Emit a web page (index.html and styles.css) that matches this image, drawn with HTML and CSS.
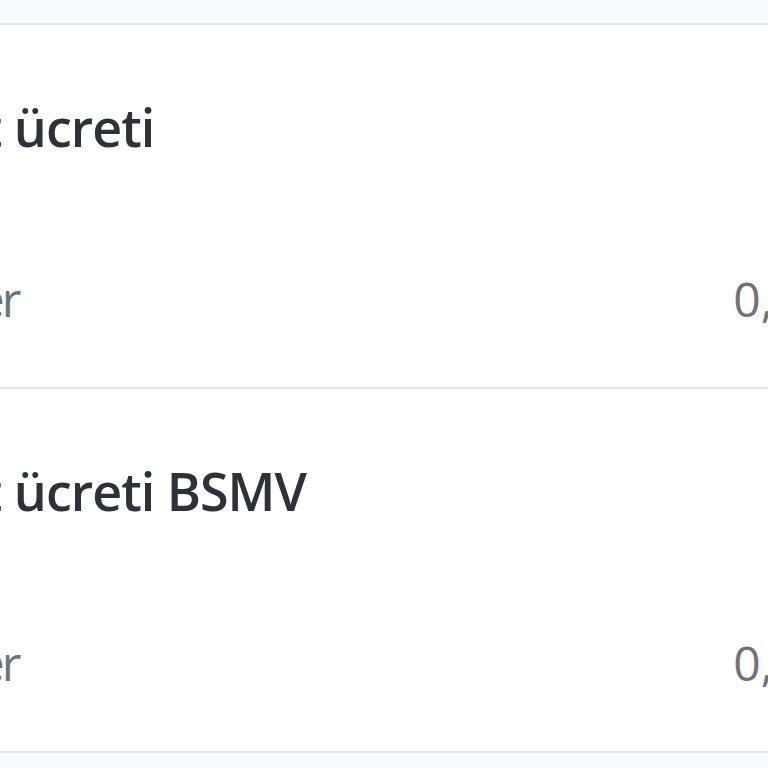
FILE: index.html
```html
<!DOCTYPE html>
<html lang="tr">
<head>
<meta charset="utf-8">
<link rel="stylesheet" href="styles.css">
<title>Ücretler</title>
</head>
<body>
<div class="page">
  <ul class="fee-list">
    <li class="fee">
      <h3 class="fee-title">Kart ücreti</h3>
      <div class="fee-row">
        <span class="fee-label">Değer</span>
        <span class="fee-value">0,00 TL</span>
      </div>
    </li>
    <li class="fee">
      <h3 class="fee-title">Kart ücreti BSMV</h3>
      <div class="fee-row">
        <span class="fee-label">Değer</span>
        <span class="fee-value">0,00 TL</span>
      </div>
    </li>
  </ul>
</div>
</body>
</html>
```
FILE: styles.css
```css
html, body {
  margin: 0;
  padding: 0;
  background: #f7f9fa;
  overflow: hidden;
  font-family: "Open Sans", "Noto Sans", sans-serif;
}

.page {
  padding-top: 23px;
  width: 768px;
  overflow: hidden;
}

.fee-list {
  list-style: none;
  margin: 0 0 0 -141px;
  padding: 0;
  width: 1123px;
  border-top: 2px solid #e3e7eb;
}

.fee {
  background: #ffffff;
  border-bottom: 2px solid #e3e7eb;
  padding: 72px 40px 60px 40px;
  height: 230px;
}

.fee-title {
  margin: 0;
  font-size: 52px;
  line-height: 60px;
  font-weight: 600;
  color: #2c3238;
  letter-spacing: -1px;
}

.fee-row {
  margin-top: 114px;
  display: flex;
  justify-content: space-between;
  font-size: 48px;
  line-height: 56px;
  color: #6d737a;
}

.fee-label {
  letter-spacing: -3px;
}

.fee-value {
  margin-right: 50px;
}
```
